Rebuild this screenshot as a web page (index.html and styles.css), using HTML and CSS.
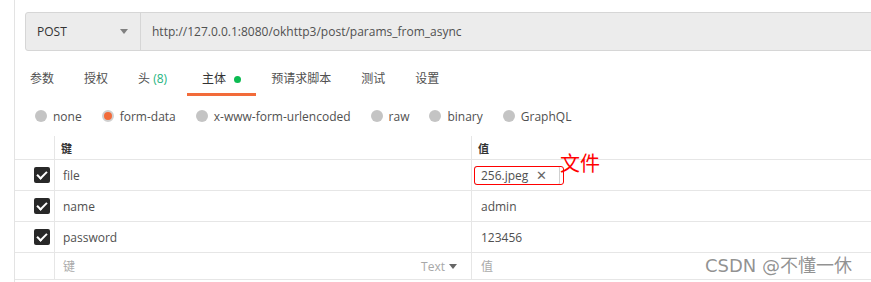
FILE: index.html
```html
<!DOCTYPE html>
<html lang="zh-CN">
<head>
    <meta charset="UTF-8">
    <title>POST params_from_async</title>
    <link rel="stylesheet" href="styles.css">
</head>
<body>
    <div class="panel">
        <div class="request-bar">
            <div class="method">
                <span>POST</span>
                <span class="caret"></span>
            </div>
            <div class="url">http://127.0.0.1:8080/okhttp3/post/params_from_async</div>
        </div>

        <div class="tabs">
            <div class="tab">参数</div>
            <div class="tab">授权</div>
            <div class="tab headers">头 <span class="count">(8)</span></div>
            <div class="tab active">主体 <span class="dot"></span></div>
            <div class="tab">预请求脚本</div>
            <div class="tab">测试</div>
            <div class="tab">设置</div>
        </div>

        <div class="body-modes">
            <label class="mode"><span class="radio"></span>none</label>
            <label class="mode"><span class="radio checked"></span>form-data</label>
            <label class="mode"><span class="radio"></span>x-www-form-urlencoded</label>
            <label class="mode"><span class="radio"></span>raw</label>
            <label class="mode"><span class="radio"></span>binary</label>
            <label class="mode"><span class="radio"></span>GraphQL</label>
        </div>

        <div class="kv-table">
            <div class="row head">
                <div class="cell check"></div>
                <div class="cell key">键</div>
                <div class="cell value">值</div>
            </div>
            <div class="row">
                <div class="cell check"><span class="checkbox"></span></div>
                <div class="cell key">file</div>
                <div class="cell value">
                    <span class="file-chip">256.jpeg <span class="remove">✕</span></span>
                    <span class="note-box"></span>
                    <span class="note">文件</span>
                </div>
            </div>
            <div class="row">
                <div class="cell check"><span class="checkbox"></span></div>
                <div class="cell key">name</div>
                <div class="cell value">admin</div>
            </div>
            <div class="row">
                <div class="cell check"><span class="checkbox"></span></div>
                <div class="cell key">password</div>
                <div class="cell value">123456</div>
            </div>
            <div class="row placeholder">
                <div class="cell check"></div>
                <div class="cell key">键 <span class="type">Text <span class="tri"></span></span></div>
                <div class="cell value">值</div>
            </div>
        </div>
    </div>

    <div class="watermark">CSDN @不懂一休</div>
</body>
</html>
```

FILE: styles.css
```css
body {
    margin: 0;
    background: #fff;
    font-family: "Open Sans", "Noto Sans CJK SC", sans-serif;
    font-size: 12px;
    color: #505050;
    overflow: hidden;
    height: 282px;
    position: relative;
}

.panel {
    margin-left: 14px;
    border-left: 1px solid #e3e3e3;
    height: 282px;
    box-sizing: border-box;
    padding-top: 12px;
    overflow: hidden;
}

/* adres */
.request-bar {
    display: flex;
    height: 39px;
    margin-left: 10px;
    width: 900px;
    background: #ececec;
    border: 1px solid #d6d6d6;
    border-radius: 3px;
    box-sizing: border-box;
}

.method {
    width: 115px;
    box-sizing: border-box;
    padding: 0 12px 0 11px;
    display: flex;
    align-items: center;
    justify-content: space-between;
    border-right: 1px solid #d6d6d6;
    color: #333;
}

.caret {
    width: 0;
    height: 0;
    border-left: 4px solid transparent;
    border-right: 4px solid transparent;
    border-top: 5px solid #808080;
}

.url {
    display: flex;
    align-items: center;
    padding-left: 11px;
    color: #505050;
}

/* tabs */
.tabs {
    display: flex;
    margin-top: 20px;
}

.tab {
    padding: 0 15px 6px;
    line-height: 16px;
    border-bottom: 3px solid transparent;
    display: flex;
    align-items: center;
    white-space: pre;
}

.tab.headers {
    padding-right: 20px;
}

.tab.active {
    border-bottom-color: #f26b3a;
    color: #333;
}

.count {
    color: #26b47f;
}

.dot {
    width: 7px;
    height: 7px;
    border-radius: 50%;
    background: #0cbb52;
    margin-left: 5px;
}

/* body mode */
.body-modes {
    display: flex;
    gap: 20px;
    padding-left: 20px;
    margin-top: 12px;
    height: 16px;
    align-items: center;
}

.mode {
    display: flex;
    align-items: center;
    gap: 6px;
}

.radio {
    width: 12px;
    height: 12px;
    border-radius: 50%;
    background: #c4c4c4;
    box-sizing: border-box;
}

.radio.checked {
    background: #f26b3a;
    border: 2px solid #d0d0d0;
}

/* tabel */
.kv-table {
    margin-top: 12px;
}

.row {
    display: flex;
    height: 30px;
    border-bottom: 1px solid #e6e6e6;
}

.row.head {
    height: 23px;
}

.cell {
    display: flex;
    align-items: center;
    box-sizing: border-box;
}

.cell.check {
    width: 40px;
    justify-content: flex-end;
    padding-right: 4px;
    border-right: 1px solid #e6e6e6;
}

.cell.key {
    width: 417px;
    padding: 0 14px 0 8px;
    border-right: 1px solid #e6e6e6;
}

.cell.value {
    flex: 1;
    padding-left: 9px;
    position: relative;
}

.head .cell {
    font-size: 11px;
    font-weight: bold;
    color: #333;
}

.head .key {
    padding-left: 6px;
}

.head .value {
    padding-left: 6px;
}

.row.placeholder {
    height: 26px;
    color: #aaa;
}

.placeholder .key {
    justify-content: space-between;
}

.type {
    display: flex;
    align-items: center;
    gap: 4px;
    color: #a8a8a8;
}

.tri {
    width: 0;
    height: 0;
    border-left: 4px solid transparent;
    border-right: 4px solid transparent;
    border-top: 5px solid #666;
}

.checkbox {
    width: 16px;
    height: 16px;
    background: #282828;
    border-radius: 2px;
    position: relative;
}

.checkbox::after {
    content: "";
    position: absolute;
    left: 5px;
    top: 2px;
    width: 4px;
    height: 8px;
    border-right: 2px solid #fff;
    border-bottom: 2px solid #fff;
    transform: rotate(45deg);
}

.file-chip {
    display: flex;
    align-items: center;
    gap: 8px;
    height: 17px;
    margin-left: -7px;
    padding: 0 12px 0 6px;
    border: 1px solid #d0d0d0;
    border-radius: 2px;
    color: #505050;
    font-size: 12px;
}

.remove {
    font-size: 13px;
    color: #666;
}

/* rode aantekening */
.note-box {
    position: absolute;
    left: 2px;
    top: 6px;
    width: 90px;
    height: 19px;
    border: 1px solid #f00;
    border-radius: 3px;
    box-sizing: border-box;
}

.note {
    position: absolute;
    left: 88px;
    top: -9px;
    font-family: "Noto Sans CJK SC", sans-serif;
    font-size: 20px;
    color: #f00;
    line-height: 24px;
}

.watermark {
    position: absolute;
    left: 705px;
    top: 251px;
    font-family: "DejaVu Sans", "Noto Sans CJK SC", sans-serif;
    font-size: 18px;
    color: rgba(110, 110, 110, 0.75);
}
```
